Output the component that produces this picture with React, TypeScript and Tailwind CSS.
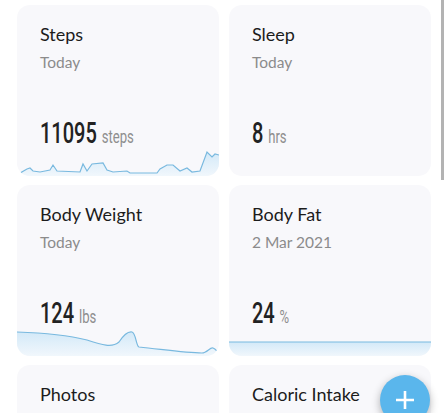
import React from "react";

type Card = {
  title: string;
  sub?: string;
  value?: string;
  unit?: string;
  chart?: "steps" | "weight" | "flat";
};

const cards: Card[] = [
  { title: "Steps", sub: "Today", value: "11095", unit: "steps", chart: "steps" },
  { title: "Sleep", sub: "Today", value: "8", unit: "hrs" },
  { title: "Body Weight", sub: "Today", value: "124", unit: "lbs", chart: "weight" },
  { title: "Body Fat", sub: "2 Mar 2021", value: "24", unit: "%", chart: "flat" },
  { title: "Photos" },
  { title: "Caloric Intake" },
];

const stepsPts: [number, number][] = [
  [0, 26], [3, 27], [10, 23], [13, 22], [16, 25], [23, 26], [33, 24], [36, 19], [40, 25],
  [63, 26], [66, 18], [70, 25], [75, 18], [86, 17], [90, 24], [96, 26], [110, 25], [113, 27],
  [140, 27], [143, 23], [150, 19], [156, 19], [163, 25], [170, 22], [175, 26], [183, 25],
  [190, 6], [195, 11], [198, 8], [202, 9],
];

function Chart({ kind }: { kind: Card["chart"] }) {
  let line = "";
  if (kind === "steps") {
    line = "M" + stepsPts.map(([x, y]) => `${x},${y}`).join(" L");
  } else if (kind === "weight") {
    line =
      "M0,6 C30,7 50,9 70,14 C85,19 95,22 102,16 C106,10 110,5 115,6 C119,7 119,20 122,21 C150,24 170,27 185,27 C190,27 193,21 196,22 C199,23 200,26 202,27";
  } else {
    line = "M0,16 L202,16";
  }
  const area = line + " L202,30 L0,30 Z";
  return (
    <svg
      className="absolute bottom-0 left-0 h-[30px] w-full"
      viewBox="0 0 202 30"
      preserveAspectRatio="none"
    >
      <defs>
        <linearGradient id={`g-${kind}`} x1="0" y1="0" x2="0" y2="1">
          <stop offset="0" stopColor="#d3e9f8" />
          <stop offset="1" stopColor="#f1f7fc" />
        </linearGradient>
      </defs>
      <path d={area} fill={`url(#g-${kind})`} />
      <path d={line} fill="none" stroke="#79b9df" strokeWidth="1.2" />
    </svg>
  );
}

function Tile({ card }: { card: Card }) {
  return (
    <div className="relative flex h-[171px] flex-col overflow-hidden rounded-[13px] bg-[#f8f8fb] px-[23px] pt-[17px]">
      <div className="text-[18px] leading-6 text-[#1c1c1c]">{card.title}</div>
      {card.sub && (
        <div className="mt-[6px] text-[15.5px] leading-5 text-[#8b8b8b]">{card.sub}</div>
      )}
      {card.value && (
        <div
          className="mt-auto mb-[27px] flex origin-left scale-x-[0.69] items-baseline gap-[7px] whitespace-nowrap"
          style={{ fontFamily: "Roboto, sans-serif" }}
        >
          <span className="text-[29px] font-medium leading-8 text-[#222]">{card.value}</span>
          <span className="text-[19px] leading-5 text-[#8e8e8e]">{card.unit}</span>
        </div>
      )}
      {card.chart && <Chart kind={card.chart} />}
    </div>
  );
}

export default function App() {
  return (
    <div
      className="relative h-[413px] w-[447px] overflow-hidden bg-white"
      style={{ fontFamily: "Lato, 'Noto Sans', sans-serif" }}
    >
      <div className="grid grid-cols-2 gap-x-[10px] gap-y-[9px] pl-[17px] pr-[16px] pt-[5px]">
        {cards.map((c) => (
          <Tile key={c.title} card={c} />
        ))}
      </div>
      <div className="absolute right-[3px] top-0 h-[180px] w-[3px] bg-[#b3b3b3]" />
      <button className="absolute left-[380px] top-[375px] flex h-[50px] w-[50px] items-center justify-center rounded-full bg-[#5ab6ec] shadow-[0_3px_8px_rgba(0,0,0,0.3)]">
        <svg width="20" height="20" viewBox="0 0 20 20">
          <path d="M10 1 V19 M1 10 H19" stroke="white" strokeWidth="2.6" />
        </svg>
      </button>
    </div>
  );
}
